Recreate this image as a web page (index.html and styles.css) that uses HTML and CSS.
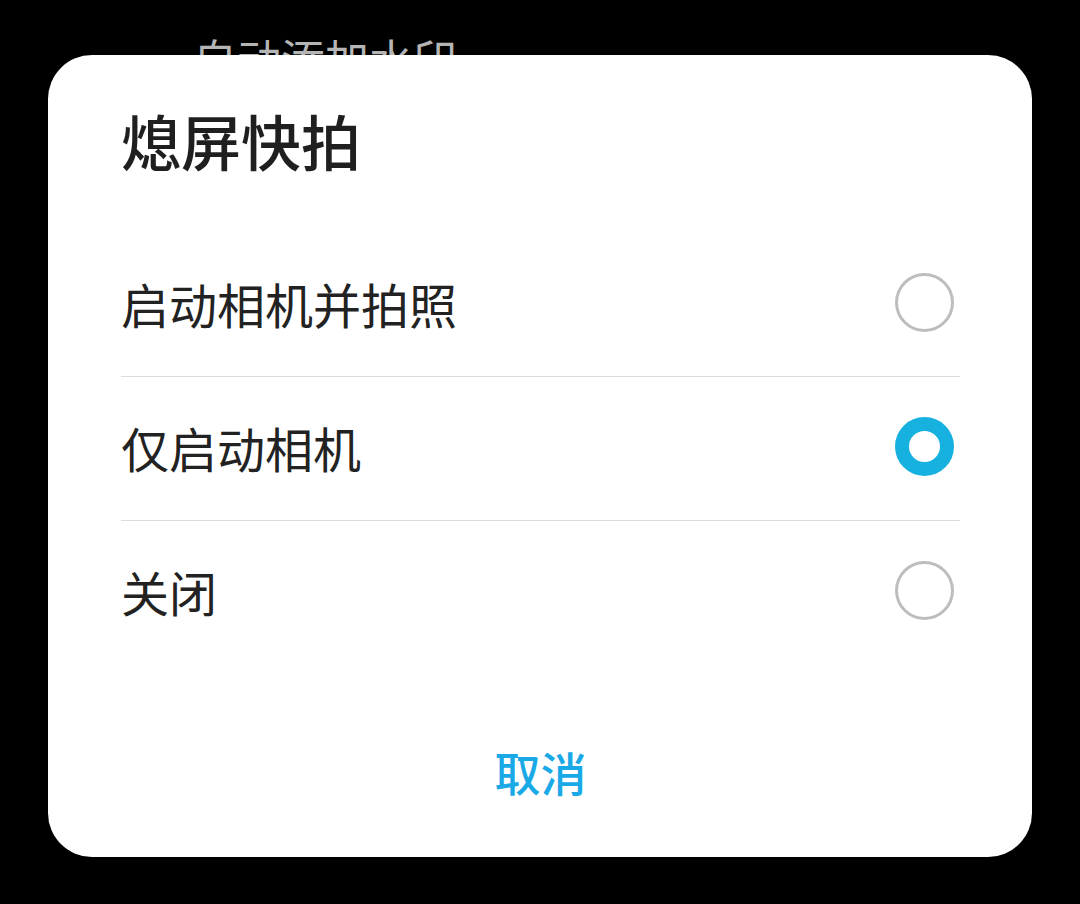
FILE: index.html
```html
<!DOCTYPE html>
<html lang="zh-CN">
<head>
  <meta charset="UTF-8" />
  <meta name="viewport" content="width=device-width, initial-scale=1.0" />
  <title>熄屏快拍</title>
  <link rel="stylesheet" href="styles.css">
</head>
<body>
  <div class="settings">
    <div class="setting-item">自动添加水印</div>
  </div>

  <div class="overlay">
    <div class="dialog">
      <h1 class="dialog-title">熄屏快拍</h1>
      <div class="options">
        <div class="option">
          <span class="option-label">启动相机并拍照</span>
          <span class="radio"></span>
        </div>
        <div class="option">
          <span class="option-label">仅启动相机</span>
          <span class="radio checked"></span>
        </div>
        <div class="option">
          <span class="option-label">关闭</span>
          <span class="radio"></span>
        </div>
      </div>
      <div class="dialog-footer">
        <button class="cancel">取消</button>
      </div>
    </div>
  </div>
</body>
</html>
```

FILE: styles.css
```css
body {
  margin: 0;
  background: #000;
  font-family: "Noto Sans CJK SC", "Noto Sans", sans-serif;
  width: 1080px;
  height: 904px;
  overflow: hidden;
}

.settings {
  padding: 36px 0 0 193px;
}

.setting-item {
  font-size: 44px;
  line-height: 1;
  color: #b5b5b5;
}

.overlay {
  position: fixed;
  top: 0;
  left: 0;
  right: 0;
  bottom: 0;
}

.dialog {
  position: absolute;
  top: 55px;
  left: 48px;
  width: 984px;
  height: 802px;
  background: #fff;
  border-radius: 44px;
  box-sizing: border-box;
  padding: 0 72px 0 73px;
  display: flex;
  flex-direction: column;
}

.dialog-title {
  margin: 55px 0 0;
  font-size: 60px;
  line-height: 60px;
  font-weight: 500;
  color: #1f1f1f;
}

.options {
  margin-top: 63px;
}

.option {
  height: 143px;
  display: flex;
  align-items: center;
  justify-content: space-between;
  border-bottom: 1px solid #dcdcdc;
}

.option:last-child {
  border-bottom: none;
}

.option-label {
  font-size: 48px;
  color: #222;
  margin-top: -4px;
}

.radio {
  width: 59px;
  height: 59px;
  box-sizing: border-box;
  border: 3px solid #bdbdbd;
  border-radius: 50%;
  margin-right: 6px;
  margin-top: -4px;
}

.radio.checked {
  border: 14px solid #17b1e0;
}

.dialog-footer {
  display: flex;
  justify-content: center;
  padding-top: 77px;
}

.cancel {
  border: none;
  background: none;
  padding: 0;
  font-family: inherit;
  font-size: 46px;
  line-height: 60px;
  font-weight: 500;
  color: #19a9e6;
}
```
